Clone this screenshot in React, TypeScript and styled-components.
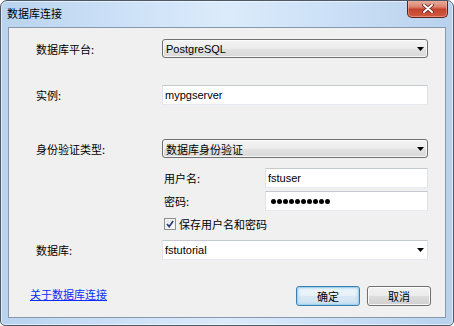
import React from "react";
import styled, { createGlobalStyle } from "styled-components";

const GlobalStyle = createGlobalStyle`
  html, body {
    margin: 0;
    padding: 0;
    background: #ffffff;
  }
  body {
    font-family: "Noto Sans CJK SC", "Liberation Sans", sans-serif;
    font-size: 11px;
  }
`;

const cjk = `"Noto Sans CJK SC", "Liberation Sans", sans-serif`;
const latin = `"Liberation Sans Narrow", "Liberation Sans", "Noto Sans CJK SC", sans-serif`;

const Window = styled.div`
  width: 454px;
  height: 326px;
  box-sizing: border-box;
  border: 1px solid #4c5866;
  border-radius: 7px 7px 5px 5px;
  background: linear-gradient(
    90deg,
    #b9d3ee 0%,
    #cbe0f7 25%,
    #dbebfb 50%,
    #cadff6 75%,
    #b8d1ec 100%
  );
  box-shadow: inset 0 0 0 1px rgba(255, 255, 255, 0.55);
  display: flex;
  flex-direction: column;
  overflow: hidden;
`;

const TitleBar = styled.div`
  height: 26px;
  flex: none;
  display: flex;
  align-items: flex-start;
  justify-content: space-between;
  padding-left: 6px;
`;

const Title = styled.div`
  font-family: ${cjk};
  font-size: 11px;
  line-height: 25px;
  color: #000;
`;

const CloseButton = styled.div`
  width: 41px;
  height: 18px;
  margin-top: -1px;
  margin-right: 5px;
  box-sizing: border-box;
  border: 1px solid #5e2119;
  border-top: none;
  border-radius: 0 0 5px 5px;
  background: linear-gradient(
    180deg,
    #eab3a4 0%,
    #dc8470 40%,
    #c5432e 55%,
    #cf5a40 100%
  );
  box-shadow: inset 0 0 0 1px rgba(255, 200, 190, 0.45);
  display: flex;
  align-items: center;
  justify-content: center;
`;

const Client = styled.div`
  flex: 1;
  margin: 0 7px 7px;
  box-sizing: border-box;
  border: 1px solid #8798ac;
  background: #f0f0f0;
  padding: 11px 14px 0 21px;
  display: flex;
  flex-direction: column;
`;

const Row = styled.div<{ $top: number; $h: number }>`
  display: grid;
  grid-template-columns: 126px 1fr;
  align-items: center;
  height: ${(p) => p.$h}px;
  margin-top: ${(p) => p.$top}px;
  padding: 0 3px 0 6px;
`;

const SubRow = styled(Row)`
  grid-template-columns: 126px 103px 1fr;
`;

const Label = styled.div<{ $indent?: number }>`
  font-family: ${cjk};
  font-size: 11px;
  color: #000;
  padding-left: ${(p) => p.$indent ?? 0}px;
  white-space: nowrap;
`;

const Combo = styled.div`
  height: 19px;
  box-sizing: border-box;
  border: 1px solid #707070;
  border-radius: 3px;
  background: linear-gradient(
    180deg,
    #f4f4f4 0%,
    #ececec 50%,
    #e2e2e2 51%,
    #d9d9d9 100%
  );
  box-shadow: inset 0 0 0 1px rgba(255, 255, 255, 0.75);
  display: flex;
  align-items: center;
  justify-content: space-between;
  padding: 0 3px 0 3px;
`;

const TextBox = styled.div<{ $h?: number }>`
  height: ${(p) => p.$h ?? 20}px;
  box-sizing: border-box;
  border: 1px solid;
  border-color: #c4c8cf #dfe2e8 #e6e9ee #dfe2e8;
  background: #ffffff;
  display: flex;
  align-items: center;
  justify-content: space-between;
  padding: 0 3px 0 2px;
`;

const Value = styled.span<{ $cjk?: boolean }>`
  font-family: ${(p) => (p.$cjk ? cjk : latin)};
  font-size: 11px;
  color: #000;
  white-space: nowrap;
`;

const Dots = styled.div`
  display: flex;
  gap: 1px;
  padding-left: 3px;
`;

const Dot = styled.span`
  width: 5px;
  height: 5px;
  border-radius: 50%;
  background: #000;
`;

const CheckWrap = styled.label`
  display: flex;
  align-items: center;
  gap: 3px;
  padding-left: 2px;
`;

const CheckBox = styled.span`
  width: 12px;
  height: 12px;
  box-sizing: border-box;
  border: 1px solid #8f8f8f;
  background: linear-gradient(135deg, #e2e2e2 0%, #f8f8f8 60%, #ffffff 100%);
  box-shadow: inset 0 0 0 1px #f4f4f4;
  display: flex;
  align-items: center;
  justify-content: center;
`;

const Footer = styled.div`
  display: flex;
  align-items: center;
  justify-content: space-between;
  margin-top: 26px;
  height: 20px;
`;

const Link = styled.a`
  font-family: ${cjk};
  font-size: 11px;
  color: #0a2cf5;
  text-decoration: underline;
  cursor: pointer;
  margin-top: -4px;
`;

const Buttons = styled.div`
  display: flex;
  gap: 7px;
`;

const Button = styled.button<{ $default?: boolean }>`
  width: 64px;
  height: 20px;
  box-sizing: border-box;
  padding: 0;
  border-radius: 3px;
  font-family: ${cjk};
  font-size: 11px;
  color: #000;
  border: 1px solid ${(p) => (p.$default ? "#3c7fb1" : "#707070")};
  background: ${(p) =>
    p.$default
      ? "linear-gradient(180deg, #f2f8fc 0%, #e6f0f8 50%, #d9e8f4 51%, #d0e3f2 100%)"
      : "linear-gradient(180deg, #f2f2f2 0%, #ebebeb 50%, #dddddd 51%, #cfcfcf 100%)"};
  box-shadow: ${(p) =>
    p.$default
      ? "inset 0 0 0 1px #9fd2f2, inset 0 0 2px 2px rgba(160, 210, 245, 0.5)"
      : "inset 0 0 0 1px rgba(255, 255, 255, 0.8)"};
`;

function Arrow() {
  return (
    <svg width="7" height="4" viewBox="0 0 7 4">
      <path d="M0 0 H7 L3.5 4 Z" fill="#000" />
    </svg>
  );
}

function CloseGlyph() {
  return (
    <svg width="12" height="9" viewBox="0 0 12 9">
      <path d="M2 1 L10 8 M10 1 L2 8" stroke="#5a2018" strokeWidth="3.6" strokeLinecap="round" />
      <path d="M2 1 L10 8 M10 1 L2 8" stroke="#ffffff" strokeWidth="2" strokeLinecap="round" />
    </svg>
  );
}

function Check() {
  return (
    <svg width="10" height="10" viewBox="0 0 10 10">
      <path d="M2 5 L4.2 7.6 L8.2 2" stroke="#2b3f7c" strokeWidth="1.7" fill="none" />
    </svg>
  );
}

export default function App() {
  return (
    <>
      <GlobalStyle />
      <Window>
        <TitleBar>
          <Title>数据库连接</Title>
          <CloseButton>
            <CloseGlyph />
          </CloseButton>
        </TitleBar>
        <Client>
          <Row $top={0} $h={19}>
            <Label>数据库平台:</Label>
            <Combo>
              <Value>PostgreSQL</Value>
              <Arrow />
            </Combo>
          </Row>
          <Row $top={27} $h={20}>
            <Label>实例:</Label>
            <TextBox>
              <Value>mypgserver</Value>
            </TextBox>
          </Row>
          <Row $top={34} $h={19}>
            <Label>身份验证类型:</Label>
            <Combo>
              <Value $cjk>数据库身份验证</Value>
              <Arrow />
            </Combo>
          </Row>
          <SubRow $top={10} $h={20}>
            <span />
            <Label $indent={2}>用户名:</Label>
            <TextBox>
              <Value>fstuser</Value>
            </TextBox>
          </SubRow>
          <SubRow $top={3} $h={20}>
            <span />
            <Label $indent={2}>密码:</Label>
            <TextBox>
              <Dots>
                {Array.from({ length: 10 }).map((_, i) => (
                  <Dot key={i} />
                ))}
              </Dots>
            </TextBox>
          </SubRow>
          <Row $top={5} $h={13}>
            <span />
            <CheckWrap>
              <CheckBox>
                <Check />
              </CheckBox>
              <Label>保存用户名和密码</Label>
            </CheckWrap>
          </Row>
          <Row $top={11} $h={20}>
            <Label>数据库:</Label>
            <TextBox>
              <Value>fstutorial</Value>
              <Arrow />
            </TextBox>
          </Row>
          <Footer>
            <Link>关于数据库连接</Link>
            <Buttons>
              <Button $default>确定</Button>
              <Button>取消</Button>
            </Buttons>
          </Footer>
        </Client>
      </Window>
    </>
  );
}
